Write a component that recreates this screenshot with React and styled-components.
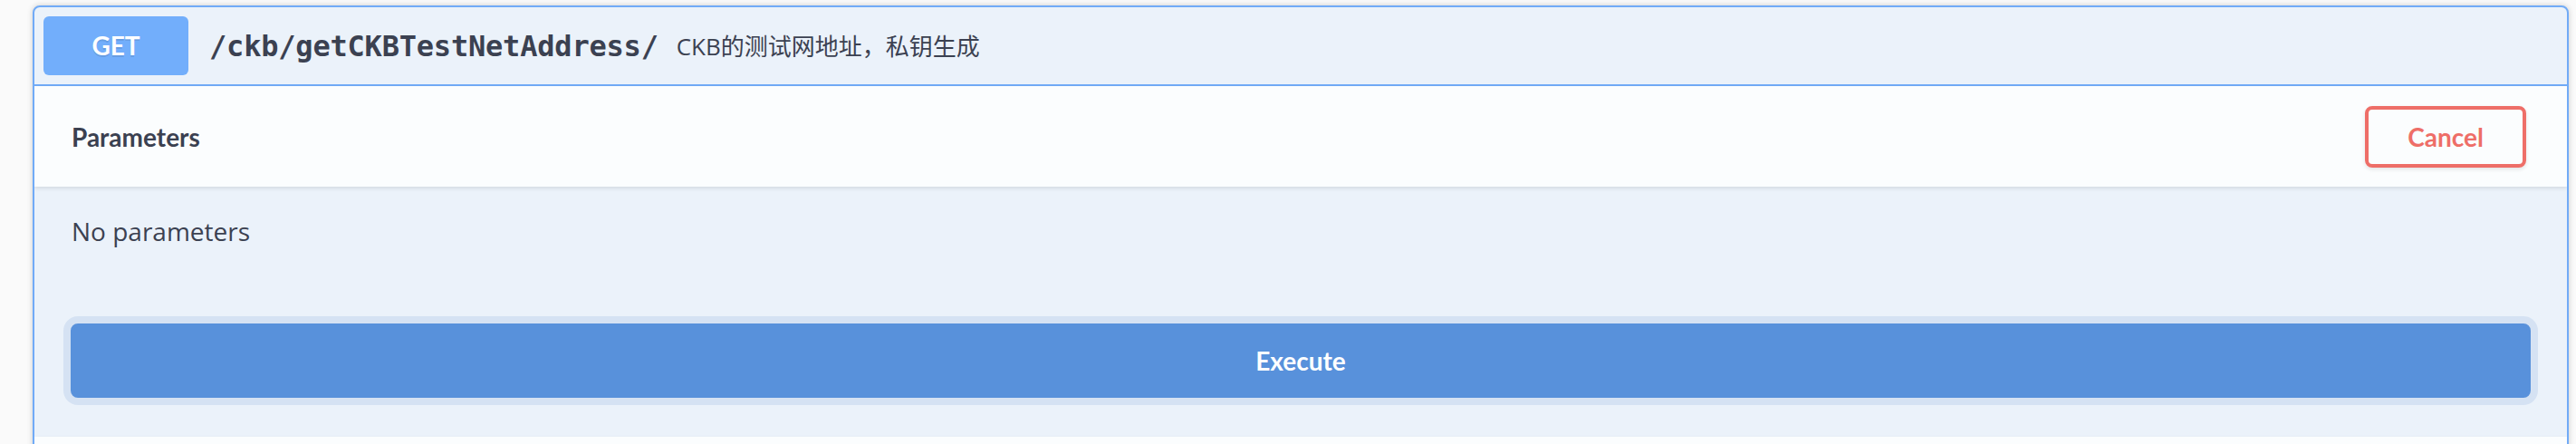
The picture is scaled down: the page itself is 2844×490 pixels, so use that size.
import React from "react";
import styled, { createGlobalStyle } from "styled-components";

const GlobalStyle = createGlobalStyle`
  body {
    margin: 0;
    background: #fafafa;
  }
`;

const Page = styled.div`
  padding: 6px 8px 0 36px;
`;

const Opblock = styled.div`
  border: 2px solid #71abf7;
  border-radius: 8px;
  background: #ebf2fa;
  box-shadow: 0 0 6px rgba(0, 0, 0, 0.19);
  overflow: hidden;
`;

const Summary = styled.div`
  display: flex;
  align-items: center;
  padding: 10px;
  border-bottom: 2px solid #71abf7;
`;

const Method = styled.span`
  min-width: 160px;
  padding: 12px 30px;
  box-sizing: border-box;
  border-radius: 6px;
  background: #72aefb;
  color: #fff;
  font-family: Lato, "Liberation Sans", sans-serif;
  font-size: 28px;
  font-weight: 700;
  line-height: 41px;
  text-align: center;
  text-shadow: 0 2px 0 rgba(0, 0, 0, 0.1);
`;

const Path = styled.span`
  padding: 0 20px 0 23px;
  font-family: "DejaVu Sans Mono", "Liberation Mono", monospace;
  font-size: 32px;
  font-weight: 700;
  letter-spacing: -0.2px;
  color: #3b4151;
  line-height: 40px;
`;

const Description = styled.span`
  font-family: "Open Sans", "Noto Sans CJK SC", sans-serif;
  font-size: 26px;
  color: #3b4151;
  line-height: 36px;
`;

const SectionHeader = styled.div`
  display: flex;
  align-items: center;
  min-height: 68px;
  padding: 22px 45px 21px 41px;
  background: rgba(255, 255, 255, 0.8);
  box-shadow: 0 2px 4px rgba(0, 0, 0, 0.1);
`;

const Title = styled.h4`
  flex: 1;
  margin: 0;
  font-family: Lato, "Liberation Sans", sans-serif;
  font-size: 28px;
  font-weight: 700;
  color: #3b4151;
`;

const Btn = styled.button`
  padding: 10px 43px;
  border: 4px solid #ee6e68;
  border-radius: 8px;
  background: transparent;
  box-shadow: 0 2px 4px rgba(0, 0, 0, 0.1);
  color: #ee6e68;
  font-family: Lato, "Liberation Sans", sans-serif;
  font-size: 28px;
  font-weight: 700;
  line-height: 40px;
  cursor: pointer;
`;

const DescriptionWrapper = styled.div`
  padding: 30px 40px 43px 41px;
  p {
    margin: 0;
    font-family: "Open Sans", sans-serif;
    font-size: 28px;
    color: #3b4151;
  }
`;

const ExecuteWrapper = styled.div`
  padding: 40px 40px 43px;
`;

const ExecuteBtn = styled.button`
  display: block;
  width: 100%;
  padding: 16px 80px;
  border: 4px solid #5891db;
  border-radius: 8px;
  background: #5891db;
  box-shadow: 0 0 0 8px #d5e2f3;
  color: #fff;
  font-family: Lato, "Liberation Sans", sans-serif;
  font-size: 28px;
  font-weight: 700;
  line-height: 42px;
  cursor: pointer;
`;

export default function App() {
  return (
    <Page>
      <GlobalStyle />
      <Opblock>
        <Summary>
          <Method>GET</Method>
          <Path>/ckb/getCKBTestNetAddress/</Path>
          <Description>CKB的测试网地址，私钥生成</Description>
        </Summary>
        <SectionHeader>
          <Title>Parameters</Title>
          <Btn>Cancel</Btn>
        </SectionHeader>
        <DescriptionWrapper>
          <p>No parameters</p>
        </DescriptionWrapper>
        <ExecuteWrapper>
          <ExecuteBtn>Execute</ExecuteBtn>
        </ExecuteWrapper>
        <SectionHeader />
      </Opblock>
    </Page>
  );
}
